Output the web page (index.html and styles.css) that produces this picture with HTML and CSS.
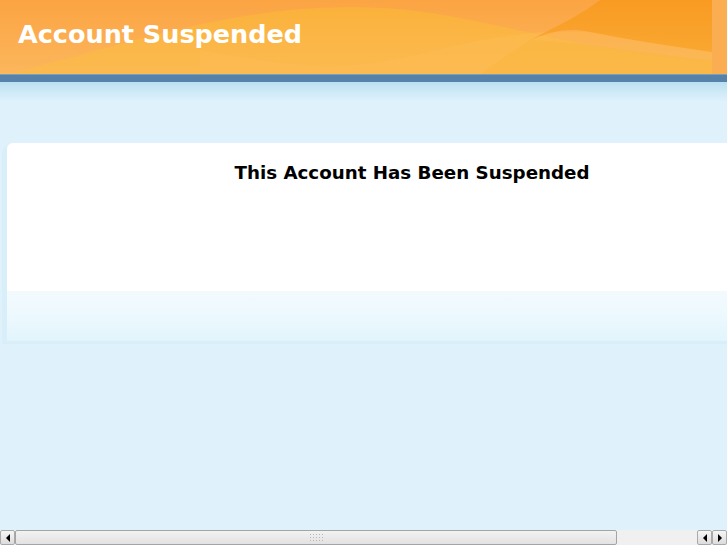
FILE: index.html
```html
<!DOCTYPE html>
<html>
<head>
<meta charset="utf-8">
<title>Account Suspended</title>
<link rel="stylesheet" href="styles.css">
</head>
<body>
<div class="page">
  <header class="header">
    <svg class="header-bg" viewBox="0 0 727 74" preserveAspectRatio="none" aria-hidden="true">
      <defs>
        <linearGradient id="base" x1="0" y1="0" x2="0" y2="1">
          <stop offset="0" stop-color="#fba443"/>
          <stop offset="1" stop-color="#fcb65c"/>
        </linearGradient>
        <linearGradient id="wave" x1="0" y1="0" x2="0" y2="1">
          <stop offset="0" stop-color="#fbb43a"/>
          <stop offset="1" stop-color="#fbbb4e"/>
        </linearGradient>
        <linearGradient id="dark" x1="0" y1="0" x2="0" y2="1">
          <stop offset="0" stop-color="#f8991d"/>
          <stop offset="1" stop-color="#f9a52a"/>
        </linearGradient>
      </defs>
      <rect width="727" height="74" fill="url(#base)"/>
      <path d="M10 74 C110 48 220 12 320 8 C390 5 430 12 480 22 C540 34 620 56 712 62 L712 74 Z" fill="url(#wave)" opacity="0.85"/>
      <path d="M200 50 C260 60 300 68 340 66 C400 64 460 40 520 34 C600 26 660 40 712 46 L712 74 L200 74 Z" fill="#fcbc55" opacity="0.45"/>
      <path d="M600 0 L712 0 L712 52 C670 46 630 40 590 32 C570 28 555 30 530 40 C560 25 585 12 600 0 Z" fill="url(#dark)" opacity="0.85"/>
      <path d="M530 40 C600 44 660 56 712 60 L712 74 L480 74 Z" fill="#fbb53a" opacity="0.45"/>
      <rect x="712" width="15" height="74" fill="#fbad52"/>
    </svg>
    <h1 class="site-title">Account Suspended</h1>
  </header>
  <div class="bluebar"></div>
  <main class="main">
    <div class="canvas">
      <section class="card">
        <div class="card-body">
          <h2 class="card-title">This Account Has Been Suspended</h2>
        </div>
        <div class="card-foot"></div>
      </section>
    </div>
  </main>
  <div class="hscroll">
    <div class="sb-btn"><span class="arrow-left"></span></div>
    <div class="sb-thumb"><span class="grip"></span></div>
    <div class="sb-track"></div>
    <div class="sb-btn"><span class="arrow-left"></span></div>
    <div class="sb-btn"><span class="arrow-right"></span></div>
  </div>
</div>
</body>
</html>
```

FILE: styles.css
```css
html, body {
  margin: 0;
  padding: 0;
  overflow: hidden;
  background: #dff2fc;
  font-family: "DejaVu Sans", Verdana, sans-serif;
}

.page {
  width: 727px;
  height: 545px;
  display: flex;
  flex-direction: column;
  overflow: hidden;
}

.header {
  height: 74px;
  flex: 0 0 74px;
  position: relative;
  display: flex;
  align-items: center;
  padding-left: 18px;
  overflow: hidden;
}

.header-bg {
  position: absolute;
  left: 0;
  top: 0;
  width: 727px;
  height: 74px;
  display: block;
}

.site-title {
  position: relative;
  margin: 0;
  margin-top: -7px;
  color: #ffffff;
  font-size: 25.5px;
  font-weight: bold;
}

.bluebar {
  flex: 0 0 7px;
  height: 6px;
  background: #5681a9;
  border-top: 1px solid #7b9fbf;
}

.main {
  flex: 1 1 auto;
  overflow: hidden;
  background: linear-gradient(to bottom, #bbdff1 0, #cfe9f7 10px, #dff2fc 20px, #dff2fc 100%);
  padding-top: 61px;
}

.canvas {
  width: 824px;
}

.card {
  margin-left: 7px;
  width: 810px;
  border-top-left-radius: 6px;
  overflow: hidden;
  box-shadow: -5px 3px 0 0 #d8effa;
}

.card-body {
  background: #ffffff;
  height: 148px;
  padding-top: 19px;
  box-sizing: border-box;
}

.card-title {
  margin: 0;
  text-align: center;
  font-size: 18.25px;
  font-weight: bold;
  color: #000000;
}

.card-foot {
  height: 50px;
  background: linear-gradient(to bottom, #f3fafe 0, #eef9fe 20px, #e6f6fd 40px, #e1f4fc 50px);
}

.hscroll {
  flex: 0 0 15px;
  height: 15px;
  display: flex;
  background: #f4f4f4;
}

.sb-btn {
  width: 13px;
  height: 13px;
  border: 1px solid #a9a9a9;
  border-radius: 2px;
  background: linear-gradient(to bottom, #f6f6f6, #dcdcdc);
  display: flex;
  align-items: center;
  justify-content: center;
  flex: 0 0 13px;
}

.arrow-left {
  width: 0;
  height: 0;
  border-top: 4px solid transparent;
  border-bottom: 4px solid transparent;
  border-right: 4px solid #000000;
}

.arrow-right {
  width: 0;
  height: 0;
  border-top: 4px solid transparent;
  border-bottom: 4px solid transparent;
  border-left: 4px solid #000000;
}

.sb-thumb {
  flex: 0 0 600px;
  height: 13px;
  border: 1px solid #a4a4a4;
  border-radius: 2px;
  background: linear-gradient(to bottom, #f2f2f2, #e2e2e2);
  display: flex;
  align-items: center;
  justify-content: center;
}

.grip {
  width: 15px;
  height: 9px;
  background-image: radial-gradient(circle, #b8b8b8 0.8px, transparent 1px);
  background-size: 3px 3px;
}

.sb-track {
  flex: 1 1 auto;
  height: 15px;
  background-color: #f7f7f7;
  background-image: radial-gradient(circle, #e6e6e6 0.6px, transparent 0.8px);
  background-size: 2px 2px;
}
```
